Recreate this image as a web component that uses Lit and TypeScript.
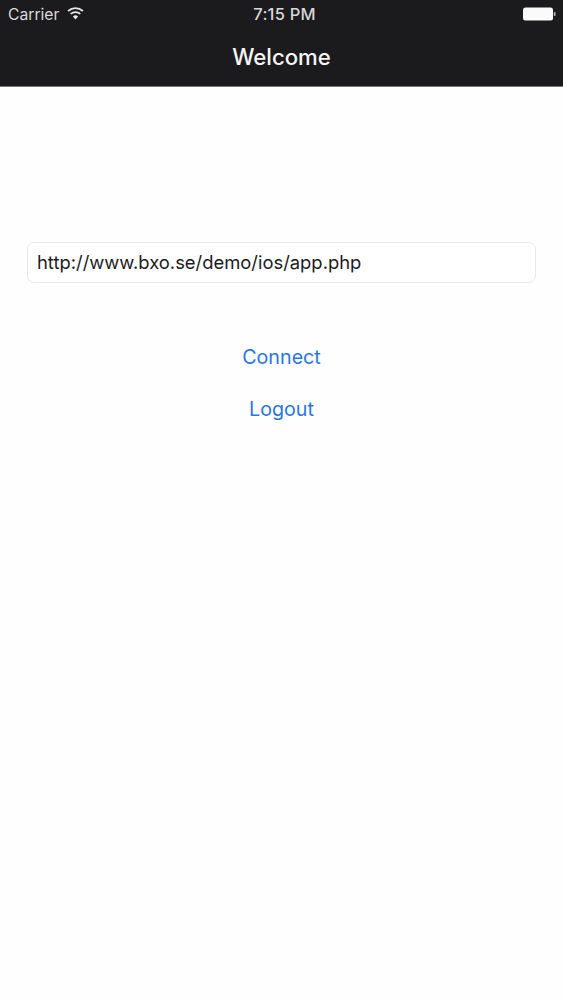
import { LitElement, html, css } from "lit";
import { customElement } from "lit/decorators.js";

@customElement("app-root")
export class AppRoot extends LitElement {
  static styles = css`
    :host {
      display: block;
      width: 563px;
      height: 1000px;
      background: #fefefe;
      font-family: "Inter", "Liberation Sans", sans-serif;
      overflow: hidden;
    }
    .nav {
      height: 86px;
      background: #1b1a1d;
      border-bottom: 1px solid #77777a;
      display: flex;
      flex-direction: column;
    }
    .status {
      height: 28px;
      display: grid;
      grid-template-columns: 1fr auto 1fr;
      align-items: center;
      color: #dcdcdc;
      font-size: 15.7px;
      padding: 0 7px 0 8px;
    }
    .left { display: flex; align-items: center; gap: 8px; }
    .left svg { display: block; margin-top: -2px; }
    .time { font-size: 16.5px; font-weight: 500; letter-spacing: 0.2px; color: #d8d8d8; margin-left: 5px; }
    .right { display: flex; justify-content: flex-end; }
    .right svg { display: block; }
    .title {
      flex: 1;
      display: flex;
      align-items: center;
      justify-content: center;
      color: #f5f5f5;
      font-size: 22.2px;
      font-weight: 500;
      padding-bottom: 1px;
    }
    .main {
      display: flex;
      flex-direction: column;
      align-items: center;
      padding: 155px 27px 0;
    }
    .field {
      box-sizing: border-box;
      width: 100%;
      height: 41px;
      border: 1px solid #e9e9e9;
      border-radius: 7px;
      background: #fff;
      padding: 0 9px 2px;
      display: flex;
      align-items: center;
      color: #1c1c1e;
      font-size: 18.4px;
    }
    .btn {
      color: #2a76e0;
      font-size: 19.7px;
      line-height: 28px;
    }
    .connect { margin-top: 60px; }
    .logout { margin-top: 24px; }
  `;

  render() {
    return html`
      <div class="nav">
        <div class="status">
          <div class="left">
            <span>Carrier</span>
            <svg width="17" height="13" viewBox="0 0 17 13">
              <path d="M8.5 12.5 L5.9 9.4 A4 4 0 0 1 11.1 9.4 Z" fill="#e6e6e6"/>
              <path d="M3.7 6.9 A7.2 7.2 0 0 1 13.3 6.9" fill="none" stroke="#e6e6e6" stroke-width="1.7"/>
              <path d="M1.1 4 A11 11 0 0 1 15.9 4" fill="none" stroke="#e6e6e6" stroke-width="1.7"/>
            </svg>
          </div>
          <div class="time">7:15 PM</div>
          <div class="right">
            <svg width="33" height="14" viewBox="0 0 33 14">
              <rect x="0" y="0.5" width="30" height="13" rx="2.5" fill="#fafafa"/>
              <rect x="30.8" y="5" width="1.7" height="4" rx="0.8" fill="#bdbdbd"/>
            </svg>
          </div>
        </div>
        <div class="title">Welcome</div>
      </div>
      <div class="main">
        <div class="field">http://www.bxo.se/demo/ios/app.php</div>
        <div class="btn connect">Connect</div>
        <div class="btn logout">Logout</div>
      </div>
    `;
  }
}
